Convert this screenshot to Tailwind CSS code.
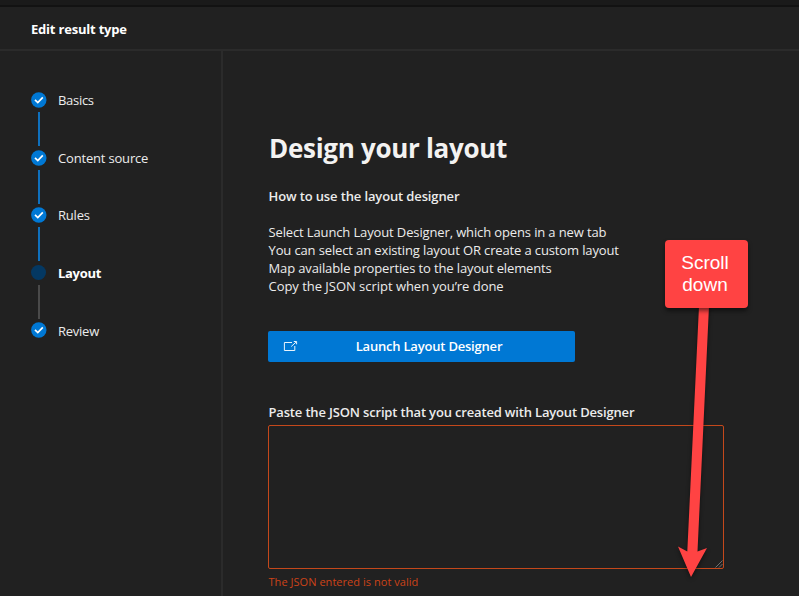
<!DOCTYPE html>
<html lang="en">
<head>
<meta charset="utf-8">
<title>Edit result type</title>
<script src="https://cdn.jsdelivr.net/npm/@tailwindcss/browser@4"></script>
</head>
<body class="relative flex h-[596px] w-[799px] flex-col overflow-hidden bg-[#212121] font-['Open_Sans','Noto_Sans',sans-serif] text-[13px] text-[#ececec]">
<svg class="hidden"><symbol id="check" viewBox="0 0 16 16"><circle cx="7.8" cy="8" r="7.7" fill="#0078d4"/><path d="M4 7.8 6.8 10.5 11.8 5.4" fill="none" stroke="#fff" stroke-width="1.7"/></symbol></svg>
<div class="h-[7px] shrink-0 border-b-2 border-[#121212] bg-[#1a1a1a]"></div>
<header class="flex h-[44px] shrink-0 items-center border-b-2 border-[#2b2b2b] pt-[3px] pl-[31px]">
  <h1 class="text-[13px] font-bold tracking-[-0.2px] text-white">Edit result type</h1>
</header>
<div class="flex min-h-0 flex-1">
  <nav class="w-[223px] shrink-0 border-r-2 border-[#2b2b2b] pt-[41px] pl-[31px]">
    <ol>
      <li class="flex h-[57.6px] gap-[11px]"><div class="flex w-4 flex-col items-center"><svg class="size-4 shrink-0"><use href="#check"/></svg><i class="mt-1 h-[34px] w-0.5 bg-[#0f70bd]"></i></div><span class="leading-4 tracking-[-0.3px]">Basics</span></li>
      <li class="flex h-[57.6px] gap-[11px]"><div class="flex w-4 flex-col items-center"><svg class="size-4 shrink-0"><use href="#check"/></svg><i class="mt-1 h-[34px] w-0.5 bg-[#0f70bd]"></i></div><span class="leading-4 tracking-[-0.18px]">Content source</span></li>
      <li class="flex h-[57.6px] gap-[11px]"><div class="flex w-4 flex-col items-center"><svg class="size-4 shrink-0"><use href="#check"/></svg><i class="mt-1 h-[34px] w-0.5 bg-[#0f70bd]"></i></div><span class="leading-4 tracking-[-0.2px]">Rules</span></li>
      <li class="flex h-[57.6px] gap-[11px]"><div class="flex w-4 flex-col items-center"><i class="mr-[1px] size-[15px] shrink-0 rounded-full bg-[#043862]"></i><i class="mt-[5px] h-[34px] w-0.5 bg-[#4a4a4a]"></i></div><span class="leading-4 font-bold tracking-[-0.3px] text-white">Layout</span></li>
      <li class="flex gap-[11px]"><svg class="size-4 shrink-0"><use href="#check"/></svg><span class="pt-[0.5px] leading-4 tracking-[-0.25px]">Review</span></li>
    </ol>
  </nav>
  <main class="pt-[78px] pl-[45px] whitespace-nowrap">
    <h2 class="h-[36px] pt-[1px] pl-[1px] text-[26px] leading-[36px] font-bold tracking-[-0.3px] text-[#f3f2f1]">Design your layout</h2>
    <h3 class="mt-[22px] h-[18px] pl-[0.5px] text-[13px] leading-[18px] font-semibold tracking-[-0.13px]">How to use the layout designer</h3>
    <div class="mt-[19.4px] pl-[0.5px] leading-[17.8px] tracking-[-0.13px]">
      <p>Select Launch Layout Designer, which opens in a new tab</p>
      <p>You can select an existing layout OR create a custom layout</p>
      <p>Map available properties to the layout elements</p>
      <p class="tracking-[-0.03px]">Copy the JSON script when you’re done</p>
    </div>
    <button class="relative mt-[35.4px] flex h-[31px] w-[307px] items-center justify-center rounded-[2px] bg-[#0078d4] pl-[14px] font-semibold tracking-[-0.2px] text-white">
      <svg class="absolute top-[9px] left-[15px] h-[13px] w-[16px]" viewBox="0 0 16 13" fill="none" stroke="#e8f3fc"><path d="M9 2.5H1.4v8h10.4V6M8.2 6.5 13.2 2M10.8 1.5H13.6V4.3"/></svg>
      <span class="pl-px">Launch Layout Designer</span>
    </button>
    <label class="mt-[42px] block h-[17px] pl-[0.5px] leading-[17px] font-semibold tracking-[-0.165px]">Paste the JSON script that you created with Layout Designer</label>
    <div class="relative mt-[4px] h-[144px] w-[456px] rounded-[2px] border border-[#c4481b]">
      <svg class="absolute right-0 bottom-0 size-[8px]" viewBox="0 0 8 8" fill="none" stroke="#858585" stroke-width=".8"><path d="M.5 7.5 7.5.5M4 7.5 7.5 4"/></svg>
    </div>
    <p class="mt-[5px] pl-[0.5px] text-[11px] leading-[16px] tracking-[0.04px] text-[#cc4318]">The JSON entered is not valid</p>
  </main>
</div>
<svg class="absolute top-0 left-0 h-[596px] w-[799px] drop-shadow-[0_2px_2px_rgba(0,0,0,0.45)]" viewBox="0 0 799 596" fill="#ff4343"><path d="M699 306h10L697.5 551.5 707 548 691 577 678 546.5 687.3 551.5Z"/></svg>
<div class="absolute top-[240px] left-[665px] flex h-[68px] w-[83px] items-center justify-center rounded-[4px] bg-[#ff4343] pr-[3px] text-center font-['Liberation_Sans',sans-serif] text-[19px] leading-[22px] text-white shadow-[0_3px_4px_rgba(0,0,0,0.5)]">Scroll<br>down</div>
</body>
</html>
